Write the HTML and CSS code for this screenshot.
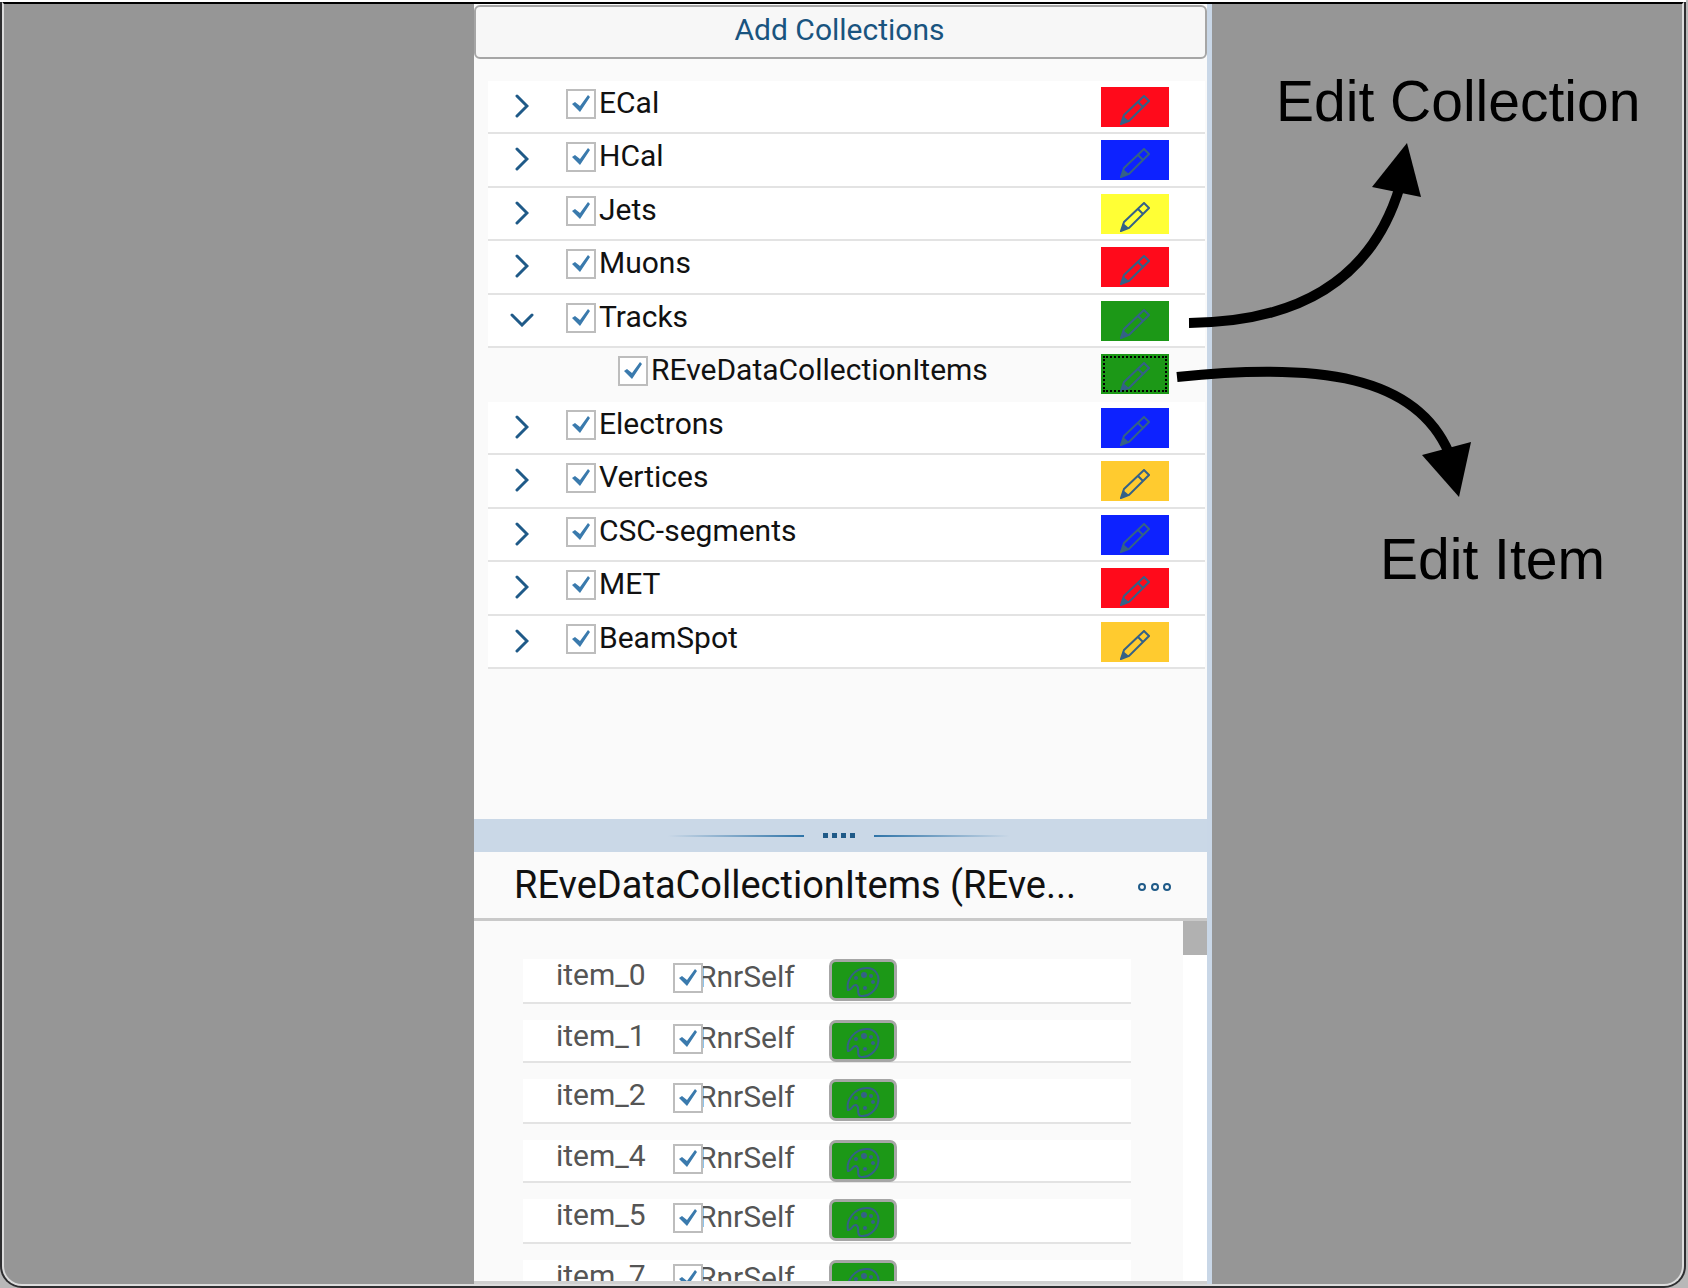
FILE: index.html
```html
<!DOCTYPE html>
<html lang="en">
<head>
<meta charset="utf-8">
<meta name="viewport" content="width=device-width, initial-scale=1">
<title>Event Display – Collections</title>
<link rel="stylesheet" href="styles.css">
</head>
<body>
<svg class="sprite" aria-hidden="true">
  <symbol id="pencil" viewBox="0 0 30 30"><path d="M4 20 L24 1 L29 6 L9 26 L1 29 Z M18 7 L23 12" fill="none" stroke="currentColor" stroke-width="2"/><path d="M1 29 L3 21 L9 26 Z" fill="currentColor"/></symbol>
  <symbol id="palette" viewBox="0 0 34 30"><path d="M2 23 C0 13 8 1 21 1 C29 1 34 8 32 16 C30 24 22 30 15 29 C9 28 15 20 10 18 C6 17 6 24 2 23 Z" fill="none" stroke="currentColor" stroke-width="2"/><g fill="currentColor"><circle cx="18" cy="8" r="3"/><circle cx="10" cy="11" r="2"/><circle cx="25" cy="9" r="2"/><circle cx="27" cy="15" r="2"/><circle cx="19" cy="21" r="2"/></g></symbol>
  <symbol id="chevron" viewBox="0 0 14 24"><path d="M2 2 L12 12 L2 22" fill="none" stroke="currentColor" stroke-width="3" stroke-linecap="round"/></symbol>
  <symbol id="chevron-down" viewBox="0 0 24 14"><path d="M2 2 L12 12 L22 2" fill="none" stroke="currentColor" stroke-width="3" stroke-linecap="round"/></symbol>
</svg>
<div class="shell">
<div class="window">
  <main class="panel">
    <button class="add" type="button">Add Collections</button>
    <section class="collections" aria-label="Collections">
      <ul class="tree">
        <li class="row"><button class="toggle" type="button" aria-label="Expand ECal"><svg width="14" height="24"><use href="#chevron"/></svg></button><input class="check" type="checkbox" id="c1" checked><label class="name" for="c1">ECal</label><button class="swatch red" type="button" aria-label="Edit ECal"><svg width="30" height="30"><use href="#pencil"/></svg></button></li>
        <li class="row"><button class="toggle" type="button" aria-label="Expand HCal"><svg width="14" height="24"><use href="#chevron"/></svg></button><input class="check" type="checkbox" id="c2" checked><label class="name" for="c2">HCal</label><button class="swatch blue" type="button" aria-label="Edit HCal"><svg width="30" height="30"><use href="#pencil"/></svg></button></li>
        <li class="row"><button class="toggle" type="button" aria-label="Expand Jets"><svg width="14" height="24"><use href="#chevron"/></svg></button><input class="check" type="checkbox" id="c3" checked><label class="name" for="c3">Jets</label><button class="swatch yellow" type="button" aria-label="Edit Jets"><svg width="30" height="30"><use href="#pencil"/></svg></button></li>
        <li class="row"><button class="toggle" type="button" aria-label="Expand Muons"><svg width="14" height="24"><use href="#chevron"/></svg></button><input class="check" type="checkbox" id="c4" checked><label class="name" for="c4">Muons</label><button class="swatch red" type="button" aria-label="Edit Muons"><svg width="30" height="30"><use href="#pencil"/></svg></button></li>
        <li class="row"><button class="toggle" type="button" aria-label="Collapse Tracks"><svg width="24" height="14"><use href="#chevron-down"/></svg></button><input class="check" type="checkbox" id="c5" checked><label class="name" for="c5">Tracks</label><button class="swatch green" type="button" aria-label="Edit Tracks"><svg width="30" height="30"><use href="#pencil"/></svg></button></li>
        <li class="row child"><input class="check" type="checkbox" id="c6" checked><label class="name" for="c6">REveDataCollectionItems</label><button class="swatch green focused" type="button" aria-label="Edit REveDataCollectionItems"><svg width="30" height="30"><use href="#pencil"/></svg></button></li>
        <li class="row"><button class="toggle" type="button" aria-label="Expand Electrons"><svg width="14" height="24"><use href="#chevron"/></svg></button><input class="check" type="checkbox" id="c7" checked><label class="name" for="c7">Electrons</label><button class="swatch blue" type="button" aria-label="Edit Electrons"><svg width="30" height="30"><use href="#pencil"/></svg></button></li>
        <li class="row"><button class="toggle" type="button" aria-label="Expand Vertices"><svg width="14" height="24"><use href="#chevron"/></svg></button><input class="check" type="checkbox" id="c8" checked><label class="name" for="c8">Vertices</label><button class="swatch orange" type="button" aria-label="Edit Vertices"><svg width="30" height="30"><use href="#pencil"/></svg></button></li>
        <li class="row"><button class="toggle" type="button" aria-label="Expand CSC-segments"><svg width="14" height="24"><use href="#chevron"/></svg></button><input class="check" type="checkbox" id="c9" checked><label class="name" for="c9">CSC-segments</label><button class="swatch blue" type="button" aria-label="Edit CSC-segments"><svg width="30" height="30"><use href="#pencil"/></svg></button></li>
        <li class="row"><button class="toggle" type="button" aria-label="Expand MET"><svg width="14" height="24"><use href="#chevron"/></svg></button><input class="check" type="checkbox" id="c10" checked><label class="name" for="c10">MET</label><button class="swatch red" type="button" aria-label="Edit MET"><svg width="30" height="30"><use href="#pencil"/></svg></button></li>
        <li class="row"><button class="toggle" type="button" aria-label="Expand BeamSpot"><svg width="14" height="24"><use href="#chevron"/></svg></button><input class="check" type="checkbox" id="c11" checked><label class="name" for="c11">BeamSpot</label><button class="swatch orange" type="button" aria-label="Edit BeamSpot"><svg width="30" height="30"><use href="#pencil"/></svg></button></li>
      </ul>
    </section>
    <div class="splitter" role="separator">
      <span class="rule rule-left"></span>
      <span class="grip"><i></i><i></i><i></i><i></i></span>
      <span class="rule rule-right"></span>
    </div>
    <header class="heading">
      <h1 class="title">REveDataCollectionItems (REve...</h1>
      <button class="more" type="button" aria-label="More"><svg width="34" height="10" viewBox="0 0 34 10" fill="none" stroke="currentColor" stroke-width="2"><circle cx="5" cy="5" r="3"/><circle cx="18" cy="5" r="3"/><circle cx="30" cy="5" r="3"/></svg></button>
    </header>
    <section class="details" aria-label="Items">
      <ul class="items">
        <li class="item"><span class="item-name">item_0</span><input class="check" type="checkbox" id="i0" checked><label class="rnr" for="i0">RnrSelf</label><button class="color" type="button" aria-label="Color of item_0"><svg width="34" height="30"><use href="#palette"/></svg></button></li>
        <li class="item"><span class="item-name">item_1</span><input class="check" type="checkbox" id="i1" checked><label class="rnr" for="i1">RnrSelf</label><button class="color" type="button" aria-label="Color of item_1"><svg width="34" height="30"><use href="#palette"/></svg></button></li>
        <li class="item"><span class="item-name">item_2</span><input class="check" type="checkbox" id="i2" checked><label class="rnr" for="i2">RnrSelf</label><button class="color" type="button" aria-label="Color of item_2"><svg width="34" height="30"><use href="#palette"/></svg></button></li>
        <li class="item"><span class="item-name">item_4</span><input class="check" type="checkbox" id="i4" checked><label class="rnr" for="i4">RnrSelf</label><button class="color" type="button" aria-label="Color of item_4"><svg width="34" height="30"><use href="#palette"/></svg></button></li>
        <li class="item"><span class="item-name">item_5</span><input class="check" type="checkbox" id="i5" checked><label class="rnr" for="i5">RnrSelf</label><button class="color" type="button" aria-label="Color of item_5"><svg width="34" height="30"><use href="#palette"/></svg></button></li>
        <li class="item"><span class="item-name">item_7</span><input class="check" type="checkbox" id="i7" checked><label class="rnr" for="i7">RnrSelf</label><button class="color" type="button" aria-label="Color of item_7"><svg width="34" height="30"><use href="#palette"/></svg></button></li>
      </ul>
      <div class="scrollbar"><div class="thumb"></div></div>
    </section>
  </main>
  <aside class="notes">
    <p class="note note-collection">Edit Collection</p>
    <p class="note note-item">Edit Item</p>
    <svg class="arrows" width="300" height="380" viewBox="1172 130 300 380" aria-hidden="true">
      <g fill="none" stroke="#000" stroke-width="10"><path d="M1189 323 C1310 322 1375 270 1400 186"/><path d="M1177 377 C1320 362 1416 376 1449 453"/></g>
      <path d="M1407 143 L1372 187 L1421 197 Z"/><path d="M1459 497 L1422 455 L1471 442 Z"/>
    </svg>
  </aside>
</div>
</div>
</body>
</html>
```
FILE: styles.css
```css
* { box-sizing: border-box; }

body {
  margin: 0;
  background: #b8b8b8;
  color: #111;
  font-family: Roboto, "Open Sans", sans-serif;
  font-size: 30px;
}

button {
  padding: 0;
  border: 0;
  background: none;
  font: inherit;
  color: #346187;
}

svg { display: block; }

.sprite { position: absolute; width: 0; height: 0; }

ul { margin: 0; padding: 0; list-style: none; }

/* window frame */
.shell {
  height: 100vh;
  margin-right: 2px;
  padding: 0 2px 2px;
  border-top: 2px solid #fff;
  border-radius: 0 0 22px 22px;
  background: #2e2e30;
}

.window {
  display: grid;
  grid-template-columns: 1fr minmax(0, 738px) 1fr;
  height: 100%;
  border: 2px solid #dcdcdc;
  border-top-color: #000;
  border-radius: 0 0 20px 20px;
  background: #969696;
}

.panel {
  grid-column: 2;
  display: flex;
  flex-direction: column;
  min-height: 0;
  padding-top: 1px;
  border-right: 5px solid #c9d7e7;
  background: #fafafa;
}

.add {
  flex: none;
  height: 54px;
  padding: 0 2px 6px 0;
  border: 2px solid #a6a6a6;
  border-radius: 6px;
  background: #f7f7f7;
  color: #19547f;
}

/* collection tree */
.collections { flex: none; height: 760px; padding: 22px 2px 0 14px; }

.row {
  display: flex;
  align-items: flex-start;
  height: 53px;
  padding: 6px 36px 0 22px;
  border-bottom: 2px solid #e3e3e3;
  background: #fff;
}

.row:nth-child(even) { height: 54px; }
.row.child { padding-left: 130px; border-color: #fafafa; background: #fafafa; }

.toggle {
  display: flex;
  align-items: center;
  justify-content: center;
  width: 24px;
  height: 38px;
  margin-right: 32px;
  color: #1f5a88;
}

.check {
  position: relative;
  flex: none;
  appearance: none;
  width: 30px;
  height: 30px;
  margin: 2px 3px 0 0;
  border: 2px solid #bdbdbd;
  background: #fff;
}

.check:checked::before {
  content: "";
  position: absolute;
  left: 4px;
  top: 4px;
  width: 18px;
  height: 17px;
  background: #3a7aad;
  clip-path: polygon(0 9px, 3px 7px, 8px 11px, 16px 0, 18px 2px, 8px 17px);
}

.name { flex: 1; line-height: 32px; }

.swatch {
  display: flex;
  justify-content: center;
  width: 68px;
  height: 40px;
  padding-top: 8px;
}

.red { background: #ff0a1b; }
.blue { background: #0d22ff; }
.yellow { background: #ffff35; }
.green { background: #1c9817; }
.orange { background: #ffcb2f; }
.focused { outline: 2px dotted #000; outline-offset: -4px; }

/* splitter */
.splitter {
  flex: none;
  display: flex;
  align-items: center;
  justify-content: center;
  gap: 19px;
  height: 33px;
  padding-right: 4px;
  background: #cad8e7;
}

.rule { width: 136px; height: 2px; }
.rule-left { background: linear-gradient(to left, #2f74a8, #cad8e7); }
.rule-right { background: linear-gradient(to right, #2f74a8, #cad8e7); }
.grip { display: flex; gap: 4px; }
.grip i { width: 5px; height: 5px; background: #1f5a88; }

/* details */
.heading {
  flex: none;
  display: flex;
  align-items: center;
  justify-content: space-between;
  height: 69px;
  padding: 0 36px 0 40px;
  border-bottom: 3px solid #c9c9c9;
}

.title {
  margin: 0;
  font-size: 38px;
  font-weight: 400;
  line-height: 48px;
  white-space: nowrap;
}

.more { padding-top: 3px; color: #1f5a88; }

.details {
  flex: 1;
  display: flex;
  min-height: 0;
  overflow: hidden;
  border-bottom: 3px solid #cfcfcf;
}

.items {
  flex: 1;
  display: flex;
  flex-direction: column;
  gap: 16px;
  padding: 38px 52px 0 49px;
  color: #555;
}

.item {
  flex: none;
  display: flex;
  align-items: flex-start;
  height: 45px;
  padding-left: 33px;
  border-bottom: 2px solid #e3e3e3;
  background: #fff;
}

.item:nth-child(even) { height: 43px; }
.item-name { width: 117px; line-height: 32px; }
.item .check { z-index: 1; margin: 4px 0 0; }
.rnr { width: 131px; margin-left: -5px; line-height: 36px; }

.color {
  display: flex;
  justify-content: center;
  width: 68px;
  height: 42px;
  padding-top: 5px;
  border: 3px solid #a6a6a6;
  border-radius: 7px;
  background: #1c9817;
}

.scrollbar { width: 24px; background: #fff; }
.thumb { height: 34px; background: #b1b1b1; }

/* annotations */
.notes {
  position: relative;
  display: flex;
  flex-direction: column;
  gap: 394px;
  padding: 65px 0 0 64px;
  color: #000;
  font-family: "Liberation Sans", Arial, sans-serif;
  font-size: 57px;
  line-height: 64px;
}

.note { margin: 0; white-space: nowrap; }
.note-item { padding-left: 104px; }
.arrows { position: absolute; left: -40px; top: 126px; }
```
